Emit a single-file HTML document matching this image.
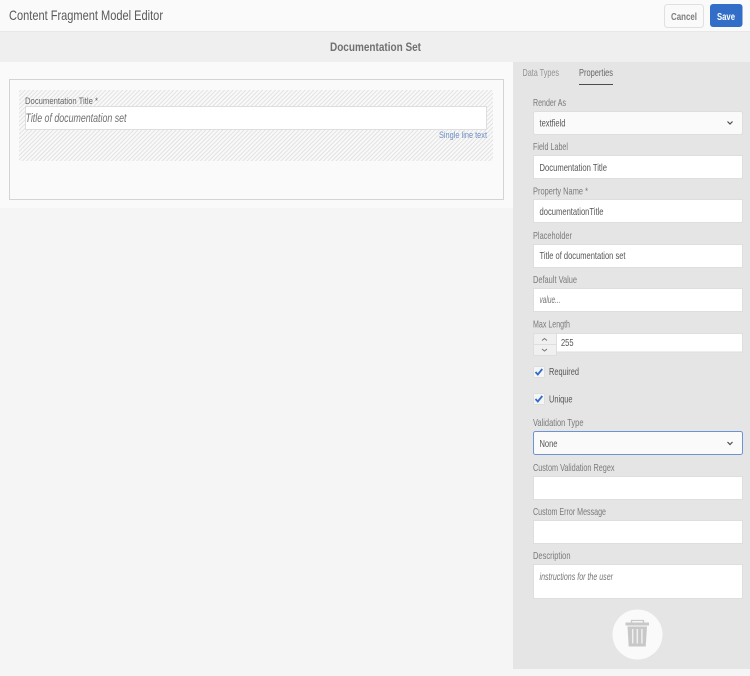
<!DOCTYPE html>
<html><head><meta charset="utf-8"><title>Content Fragment Model Editor</title>
<style>
html,body{margin:0;padding:0;width:750px;height:676px;overflow:hidden;background:#f5f5f5}
svg{display:block;filter:blur(.3px)}
text{font-family:"Liberation Sans",sans-serif}
.l{font-size:10.5px;fill:#7a7a7a}
.v{font-size:10.5px;fill:#555}
.i{font-size:10.5px;fill:#757575;font-style:italic}
.f{fill:#fff;stroke:#dedede;stroke-width:1}
.ch{fill:none;stroke:#4b4b4b;stroke-width:1.2}
</style></head><body>
<svg width="750" height="676" viewBox="0 0 750 676" xmlns="http://www.w3.org/2000/svg">
<defs>
<pattern id="h" width="3" height="3" patternUnits="userSpaceOnUse" patternTransform="rotate(45)">
<rect width="3" height="3" fill="#f9f9f9"/><rect width="1" height="3" fill="#e2e2e2"/>
</pattern>
</defs>
<rect width="750" height="676" fill="#f5f5f5"/>
<rect width="750" height="31" fill="#fafafa"/>
<rect y="31" width="750" height="1" fill="#e8e8e8"/>
<rect y="32" width="750" height="30" fill="#efefef"/>
<rect y="62" width="513" height="146" fill="#fafafa"/>
<rect x="513" y="62" width="237" height="607" fill="#e5e5e5"/>

<text x="9" y="20" textLength="154" lengthAdjust="spacingAndGlyphs" style="font-size:14px;fill:#5a5a5a">Content Fragment Model Editor</text>
<text x="330" y="51" textLength="91" lengthAdjust="spacingAndGlyphs" style="font-size:11.5px;font-weight:bold;fill:#707070">Documentation Set</text>

<rect x="664.5" y="4.5" width="39" height="23" rx="3" fill="#fafafa" stroke="#e0e0e0"/>
<text x="671" y="20" textLength="26" lengthAdjust="spacingAndGlyphs" style="font-size:10.5px;font-weight:bold;fill:#7d7d7d">Cancel</text>
<rect x="710" y="4" width="32.5" height="23" rx="3" fill="#326ec8"/>
<text x="717" y="20" textLength="18" lengthAdjust="spacingAndGlyphs" style="font-size:10.5px;font-weight:bold;fill:#fff">Save</text>

<rect x="9.5" y="79.5" width="494" height="120" fill="#fafafa" stroke="#d4d4d4"/>
<rect x="19" y="90" width="474" height="71" fill="url(#h)"/>
<text x="25" y="104" textLength="73" lengthAdjust="spacingAndGlyphs" style="font-size:9.5px;fill:#666">Documentation Title *</text>
<rect x="25.500" y="106.500" width="461" height="23" class="f"/>
<text x="25.500" y="122" textLength="101" lengthAdjust="spacingAndGlyphs" style="font-size:11.5px;font-style:italic;fill:#6e6e6e">Title of documentation set</text>
<text x="439" y="138" textLength="48" lengthAdjust="spacingAndGlyphs" style="font-size:9.5px;fill:#6d8fc4">Single line text</text>

<text x="522.500" y="76" textLength="36.500" lengthAdjust="spacingAndGlyphs" style="font-size:10.5px;fill:#929292">Data Types</text>
<text x="579" y="76" textLength="34" lengthAdjust="spacingAndGlyphs" style="font-size:10.5px;fill:#666">Properties</text>
<rect x="579" y="84" width="34" height="1" fill="#4b4b4b"/>

<text x="533" y="106" textLength="33" lengthAdjust="spacingAndGlyphs" class="l">Render As</text>
<rect x="533.500" y="111.500" width="209" height="23" rx="2" fill="#fafafa" stroke="#dedede"/>
<text x="539.500" y="126.500" textLength="26" lengthAdjust="spacingAndGlyphs" class="v">textfield</text>
<path d="M727.500 121.500l2.500 2.500 2.500-2.500" class="ch"/>

<text x="533" y="150" textLength="35" lengthAdjust="spacingAndGlyphs" class="l">Field Label</text>
<rect x="533.500" y="155.500" width="209" height="23" class="f"/>
<text x="539.500" y="171" textLength="67.500" lengthAdjust="spacingAndGlyphs" class="v">Documentation Title</text>

<text x="533" y="194.500" textLength="55" lengthAdjust="spacingAndGlyphs" class="l">Property Name *</text>
<rect x="533.500" y="199.500" width="209" height="23" class="f"/>
<text x="539.500" y="215" textLength="64" lengthAdjust="spacingAndGlyphs" class="v">documentationTitle</text>

<text x="533" y="239" textLength="39" lengthAdjust="spacingAndGlyphs" class="l">Placeholder</text>
<rect x="533.500" y="244.500" width="209" height="23" class="f"/>
<text x="539.500" y="259" textLength="86" lengthAdjust="spacingAndGlyphs" class="v">Title of documentation set</text>

<text x="533" y="283" textLength="44" lengthAdjust="spacingAndGlyphs" class="l">Default Value</text>
<rect x="533.500" y="288.500" width="209" height="23" class="f"/>
<text x="539.500" y="303" textLength="21" lengthAdjust="spacingAndGlyphs" class="i">value...</text>

<text x="533" y="327.500" textLength="37" lengthAdjust="spacingAndGlyphs" class="l">Max Length</text>
<rect x="533.500" y="333.500" width="23" height="22" rx="1" fill="#f0f0f0" stroke="#dedede"/>
<rect x="533.500" y="344" width="23" height="1" fill="#dedede"/>
<path d="M542 340.500l2.500-2 2.500 2M542 349l2.500 2 2.500-2" fill="none" stroke="#777" stroke-width="1"/>
<rect x="556.500" y="333.500" width="186" height="18.500" class="f"/>
<text x="561" y="346" textLength="12.500" lengthAdjust="spacingAndGlyphs" class="v">255</text>

<rect x="533.500" y="366.500" width="11" height="11" rx="1" fill="#f5f5f5" stroke="#dedede"/>
<path d="M535.500 372l2.300 2.500 4.500-5.500" fill="none" stroke="#326ec8" stroke-width="1.800"/>
<text x="549" y="375" textLength="30" lengthAdjust="spacingAndGlyphs" class="v">Required</text>
<rect x="533.500" y="393.500" width="11" height="11" rx="1" fill="#f5f5f5" stroke="#dedede"/>
<path d="M535.500 399l2.300 2.500 4.500-5.500" fill="none" stroke="#326ec8" stroke-width="1.800"/>
<text x="549" y="402.500" textLength="23.500" lengthAdjust="spacingAndGlyphs" class="v">Unique</text>

<text x="533" y="426" textLength="50.500" lengthAdjust="spacingAndGlyphs" class="l">Validation Type</text>
<rect x="533.500" y="431.500" width="209" height="23" rx="2" fill="#fafafa" stroke="#6d93d3"/>
<text x="539.500" y="447" textLength="18" lengthAdjust="spacingAndGlyphs" class="v">None</text>
<path d="M727.500 442l2.500 2.500 2.500-2.500" class="ch"/>

<text x="533" y="471" textLength="81.500" lengthAdjust="spacingAndGlyphs" class="l">Custom Validation Regex</text>
<rect x="533.500" y="476.500" width="209" height="23" class="f"/>
<text x="533" y="515" textLength="73" lengthAdjust="spacingAndGlyphs" class="l">Custom Error Message</text>
<rect x="533.500" y="520.500" width="209" height="23" class="f"/>
<text x="533" y="559" textLength="37.500" lengthAdjust="spacingAndGlyphs" class="l">Description</text>
<rect x="533.500" y="564.500" width="209" height="34" class="f"/>
<text x="539.500" y="580" textLength="73.500" lengthAdjust="spacingAndGlyphs" class="i" style="font-size:10px">instructions for the user</text>

<circle cx="637.500" cy="634.500" r="25" fill="#fafafa"/>
<path d="M631.500 623v-2.500h12v2.500" fill="none" stroke="#c8c8c8" stroke-width="1.300"/>
<rect x="625.500" y="622.500" width="23.500" height="3" fill="#c8c8c8"/>
<path d="M627.500 626.500h19.500l-1.300 20h-17z" fill="#c8c8c8"/>
<path d="M632.700 629v14.500M637.300 629v14.500M641.900 629v14.500" stroke="#f0f0f0" stroke-width="1.500" fill="none"/>
</svg>
</body></html>
